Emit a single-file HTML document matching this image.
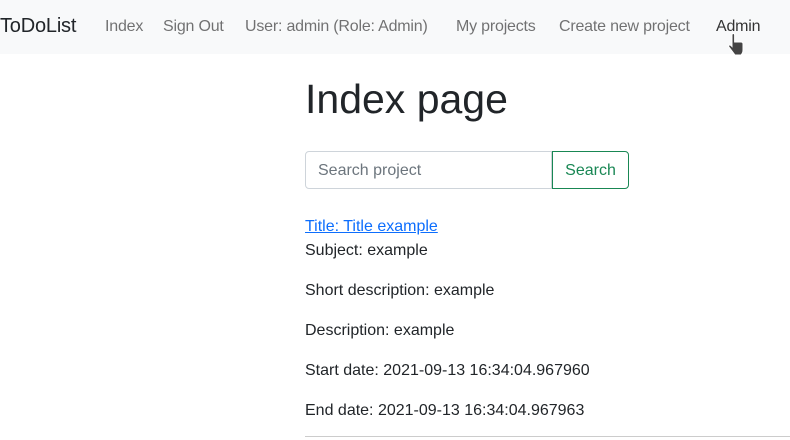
<!DOCTYPE html>
<html><head><meta charset="utf-8"><style>
body{margin:0;width:790px;height:440px;overflow:hidden;background:#fff;font-family:"Liberation Sans",sans-serif;color:#212529;position:relative}
.nav{position:absolute;left:0;top:0;width:790px;height:54px;background:#f8f9fa}
.nav span{position:absolute;top:18px;font-size:16px;color:rgba(0,0,0,.55);white-space:nowrap;letter-spacing:-0.2px}
.nav .brand{top:15px;font-size:20px;color:#212529}
.nav .act{color:rgba(0,0,0,.8)}
h1{position:absolute;left:305px;top:75px;margin:0;font-size:41px;font-weight:500;line-height:48px}
.inp{position:absolute;left:305px;top:151px;width:247px;height:38px;border:1px solid #ced4da;border-radius:4px 0 0 4px;box-sizing:border-box;font-size:16px;color:#6c757d;padding:10px 12px}
.btn{position:absolute;left:552px;top:151px;width:77px;height:38px;border:1px solid #198754;border-radius:0 4px 4px 0;box-sizing:border-box;font-size:16px;color:#198754;text-align:center;line-height:38px}
.t{position:absolute;left:305px;font-size:16px;white-space:nowrap}
a{color:#0d6efd;text-decoration:underline}
hr{position:absolute;left:305px;top:436px;width:485px;margin:0;border:0;border-top:1px solid #ccc}
</style></head><body>
<div class="nav">
<span class="brand" style="left:0">ToDoList</span>
<span style="left:105px">Index</span>
<span style="left:163px">Sign Out</span>
<span style="left:245px">User: admin (Role: Admin)</span>
<span style="left:456px">My projects</span>
<span style="left:559px">Create new project</span>
<span class="act" style="left:716px">Admin</span>
<svg style="position:absolute;left:726px;top:32px" width="22" height="26" viewBox="0 0 22 26"><g fill="#444" stroke="#fff" stroke-width="1"><path d="M3 15 Q2 13.5 3.5 13 Q4.5 12.8 5.5 14 L6 14.5 V3 Q6 1.5 7.3 1.5 Q8.6 1.5 8.6 3 V10 H15 Q17 10 17 12 V18 Q17 21 15 23 H9 Z"/></g></svg>
</div>
<h1>Index page</h1>
<div class="inp">Search project</div>
<div class="btn">Search</div>
<div class="t" style="top:218px"><a>Title: Title example</a></div>
<div class="t" style="top:242px">Subject: example</div>
<div class="t" style="top:282px">Short description: example</div>
<div class="t" style="top:322px">Description: example</div>
<div class="t" style="top:362px">Start date: 2021-09-13 16:34:04.967960</div>
<div class="t" style="top:402px">End date: 2021-09-13 16:34:04.967963</div>
<hr>
</body></html>
